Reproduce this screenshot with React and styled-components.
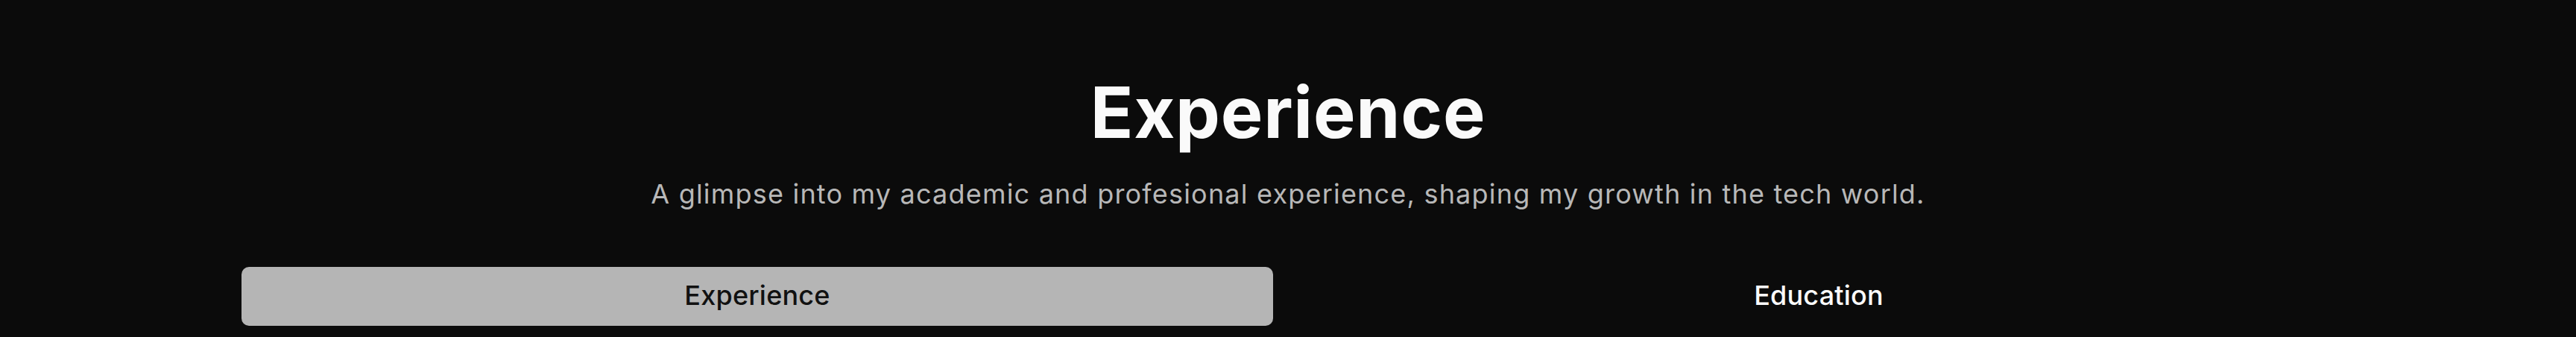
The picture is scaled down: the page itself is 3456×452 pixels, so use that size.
import React, { useState } from 'react';
import styled, { createGlobalStyle } from 'styled-components';

const GlobalStyle = createGlobalStyle`
  html, body {
    margin: 0;
    padding: 0;
    background: #0b0b0b;
  }
  body {
    font-family: 'Inter', 'Noto Sans', sans-serif;
  }
`;

const tabs = ['Experience', 'Education'];

function App() {
  const [active, setActive] = useState('Experience');
  return (
    <>
      <GlobalStyle />
      <Section>
        <Title>Experience</Title>
        <Subtitle>
          A glimpse into my academic and profesional experience, shaping my
          growth in the tech world.
        </Subtitle>
        <TabList>
          {tabs.map((t) => (
            <Tab key={t} $active={active === t} onClick={() => setActive(t)}>
              {t}
            </Tab>
          ))}
        </TabList>
      </Section>
    </>
  );
}

const Section = styled.section`
  min-height: 452px;
  padding-top: 103px;
  box-sizing: border-box;
  display: flex;
  flex-direction: column;
  align-items: center;
  background: #0b0b0b;
`;

const Title = styled.h2`
  margin: 0;
  font-size: 95px;
  line-height: 95px;
  font-weight: 700;
  color: #fafafa;
  letter-spacing: 0.8px;
`;

const Subtitle = styled.p`
  margin: 35px 0 0;
  font-size: 36px;
  line-height: 54px;
  font-weight: 400;
  color: #b8b8b8;
  letter-spacing: 1.2px;
`;

const TabList = styled.div`
  margin-top: 71px;
  width: 100%;
  max-width: 2808px;
  display: grid;
  grid-template-columns: 1fr 1fr;
  gap: 40px;
`;

const Tab = styled.button`
  border: none;
  border-radius: 10px;
  padding: 11px 0 14px;
  font-family: inherit;
  font-size: 36px;
  line-height: 54px;
  font-weight: 500;
  letter-spacing: 0.2px;
  cursor: pointer;
  background: ${(p) => (p.$active ? '#b5b5b5' : 'transparent')};
  color: ${(p) => (p.$active ? '#111111' : '#fafafa')};
`;

export default App;
